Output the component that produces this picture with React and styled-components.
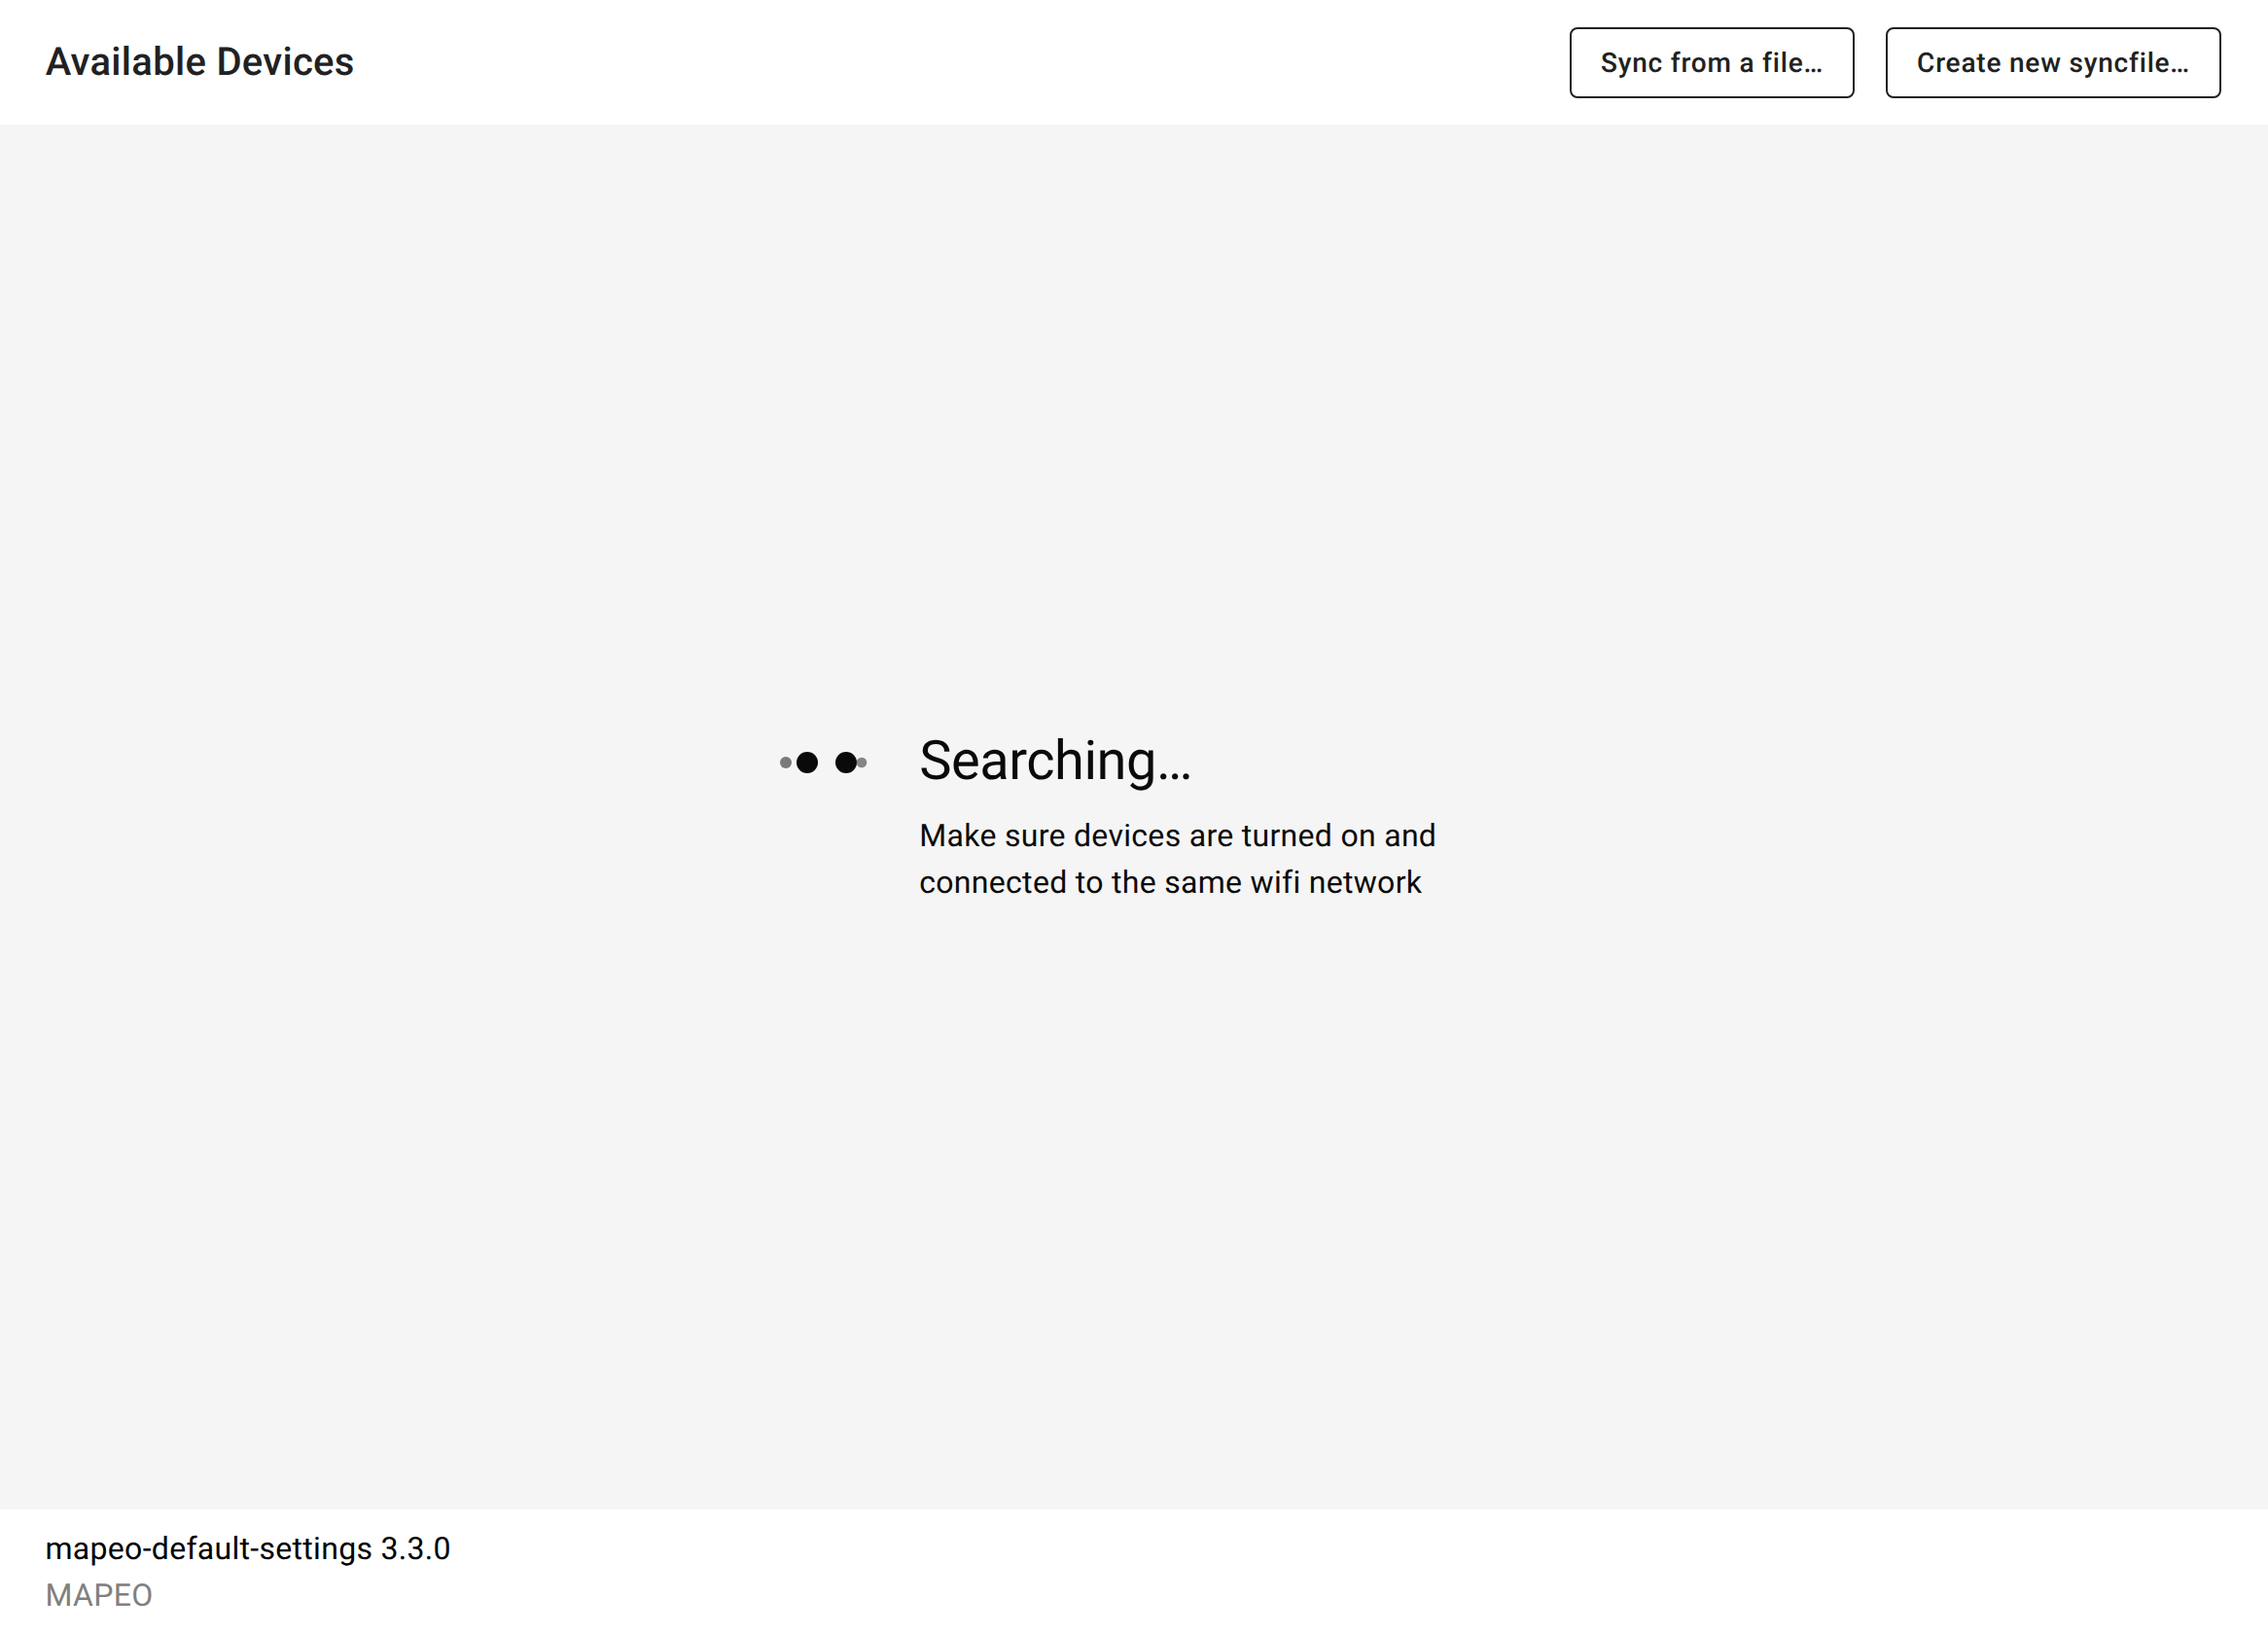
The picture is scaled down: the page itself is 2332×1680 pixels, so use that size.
import React from "react";
import styled, { createGlobalStyle } from "styled-components";

const GlobalStyle = createGlobalStyle`
  *, *::before, *::after { box-sizing: border-box; }
  body {
    margin: 0;
    font-family: Roboto, "Liberation Sans", sans-serif;
    -webkit-font-smoothing: antialiased;
    text-rendering: geometricPrecision;
  }
`;

const Page = styled.div`
  display: flex;
  flex-direction: column;
  height: 100vh;
  background: #fff;
`;

const Header = styled.header`
  display: flex;
  align-items: center;
  gap: 32px;
  height: 128px;
  padding: 1px 48px 0 46.75px;
`;

const Title = styled.h1`
  flex: 1;
  margin: 0 0 2px;
  color: #212121;
  font-size: 40px;
  font-weight: 500;
  line-height: 64px;
  letter-spacing: 0.0075em;
`;

const OutlinedButton = styled.button`
  padding: 10px 30px;
  border: 2px solid #212121;
  border-radius: 8px;
  background: transparent;
  color: #212121;
  font-family: inherit;
  font-size: 28px;
  font-weight: 500;
  line-height: 49px;
  letter-spacing: 0.02857em;
  text-rendering: inherit;
  white-space: nowrap;
`;

const Main = styled.main`
  display: flex;
  flex: 1;
  align-items: flex-start;
  justify-content: center;
  padding: 622px 50px 0 0;
  background: #f5f5f5;
  color: #0a0a0a;
`;

const Loader = styled.svg`
  display: block;
  flex: none;
  width: 96px;
  height: 32px;
  margin: 18px 55.25px 0 0;
`;

const Message = styled.div`
  flex: none;
  width: 542.75px;
`;

const Status = styled.h2`
  margin: 0 0 21px;
  font-size: 56px;
  font-weight: 400;
  line-height: 64px;
  letter-spacing: -0.00833em;
`;

const Text = styled.p`
  margin: 0;
  color: ${(p) => p.$color || "inherit"};
  font-size: 32px;
  line-height: 48px;
  letter-spacing: 0.00938em;
`;

const Footer = styled.footer`
  height: 128px;
  padding: 16px 46.5px;
`;

const dots = [
  { x: 14, r: 6, fill: "#7a7a7a" },
  { x: 36, r: 11, fill: "#0a0a0a" },
  { x: 76, r: 11, fill: "#0a0a0a" },
  { x: 92, r: 5.3, fill: "#858585" },
];

export default function App() {
  return (
    <Page>
      <GlobalStyle />
      <Header>
        <Title>Available Devices</Title>
        <OutlinedButton>Sync from a file…</OutlinedButton>
        <OutlinedButton>Create new syncfile…</OutlinedButton>
      </Header>
      <Main>
        <Loader viewBox="0 0 96 32" overflow="visible" aria-hidden="true">
          {dots.map((d) => (
            <circle key={d.x} cx={d.x} cy="16" r={d.r} fill={d.fill} />
          ))}
        </Loader>
        <Message>
          <Status>Searching…</Status>
          <Text>
            Make sure devices are turned on and
            <br />
            connected to the same wifi network
          </Text>
        </Message>
      </Main>
      <Footer>
        <Text $color="#000">mapeo-default-settings 3.3.0</Text>
        <Text $color="#808080">MAPEO</Text>
      </Footer>
    </Page>
  );
}
